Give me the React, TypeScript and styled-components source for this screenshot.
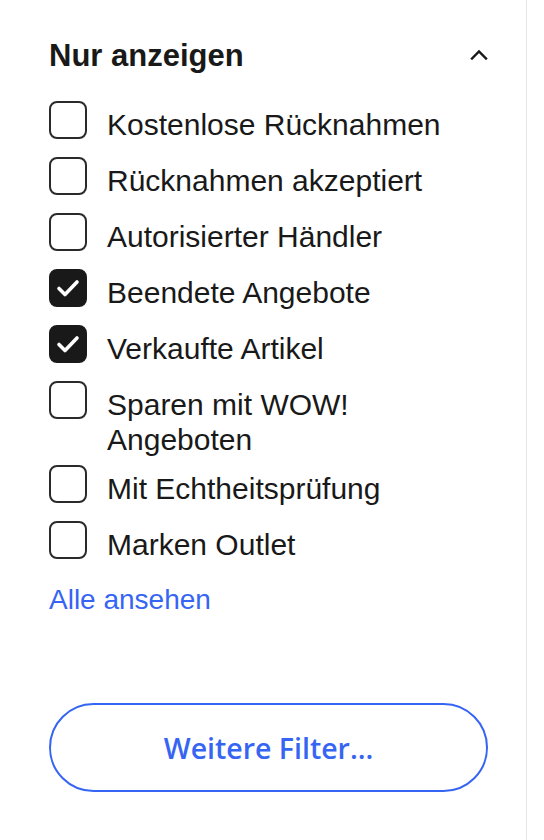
import * as React from 'react';
import styled, {createGlobalStyle} from 'styled-components';

const GlobalStyle = createGlobalStyle`
  body {
    margin: 0;
    background: #ffffff;
    font-family: "Liberation Sans", Arial, Helvetica, sans-serif;
    color: #191919;
  }
`;

const Panel = styled.aside`
  width: 527px;
  min-height: 840px;
  box-sizing: border-box;
  padding: 38px 38px 40px 49px;
  border-right: 1px solid #e5e5e5;
  background: #ffffff;
`;

const Header = styled.div`
  display: flex;
  justify-content: space-between;
  align-items: center;
  height: 36px;
`;

const Title = styled.h3`
  margin: 0;
  font-size: 31px;
  line-height: 36px;
  font-weight: 700;
  color: #191919;
`;

const ToggleButton = styled.button`
  display: flex;
  align-items: center;
  justify-content: center;
  padding: 0;
  margin-top: -4px;
  border: none;
  background: none;
  color: #191919;
  cursor: pointer;
`;

const List = styled.ul`
  list-style: none;
  margin: 25px 0 0;
  padding: 0;
  display: flex;
  flex-direction: column;
  gap: 14px;
`;

const Row = styled.li`
  display: flex;
  align-items: flex-start;
  gap: 20px;
  cursor: pointer;
`;

const BoxWrap = styled.span`
  flex: none;
  height: 42px;
  display: flex;
  align-items: center;
`;

interface BoxProps {
  $checked: boolean;
}
const Box = styled.span<BoxProps>`
  box-sizing: border-box;
  width: 38px;
  height: 38px;
  border-radius: 8px;
  border: 2px solid ${(p: BoxProps) => (p.$checked ? '#191919' : '#2a2a2a')};
  background: ${(p: BoxProps) => (p.$checked ? '#191919' : '#ffffff')};
  display: flex;
  align-items: center;
  justify-content: center;
`;

const LabelText = styled.span`
  font-size: 30px;
  line-height: 35px;
  margin-top: 8px;
  margin-bottom: -8px;
  color: #191919;
`;

const SeeAll = styled.a`
  display: inline-block;
  margin-top: 22px;
  font-size: 28px;
  line-height: 34px;
  color: #3665f3;
  text-decoration: none;
`;

const MoreFilters = styled.button`
  display: flex;
  align-items: center;
  justify-content: center;
  width: 100%;
  height: 89px;
  margin-top: 86px;
  border: 2px solid #3665f3;
  border-radius: 45px;
  background: #ffffff;
  color: #3665f3;
  font-family: "Open Sans", "Liberation Sans", sans-serif;
  font-size: 28.5px;
  font-weight: 600;
  cursor: pointer;
`;

const items: {label: string; checked: boolean}[] = [
  {label: 'Kostenlose Rücknahmen', checked: false},
  {label: 'Rücknahmen akzeptiert', checked: false},
  {label: 'Autorisierter Händler', checked: false},
  {label: 'Beendete Angebote', checked: true},
  {label: 'Verkaufte Artikel', checked: true},
  {label: 'Sparen mit WOW! Angeboten', checked: false},
  {label: 'Mit Echtheitsprüfung', checked: false},
  {label: 'Marken Outlet', checked: false},
];

const ChevronUp = () => (
  <svg width="18" height="11" viewBox="0 0 18 11" fill="none">
    <path d="M2 9.5 L9 2.5 L16 9.5" stroke="currentColor" strokeWidth="2.4" strokeLinecap="square" />
  </svg>
);

const Check = () => (
  <svg width="26" height="26" viewBox="0 0 26 26" fill="none">
    <path d="M4 13.5 L10 19.5 L22 7" stroke="#ffffff" strokeWidth="3.6" strokeLinecap="round" strokeLinejoin="round" />
  </svg>
);

const App: React.FunctionComponent = () => {
  const [state, setState] = React.useState(items);

  const toggle = (i: number) =>
    setState((s) => s.map((it, k) => (k === i ? {...it, checked: !it.checked} : it)));

  return (
    <React.Fragment>
      <GlobalStyle />
      <Panel>
        <Header>
          <Title>Nur anzeigen</Title>
          <ToggleButton aria-label="Einklappen">
            <ChevronUp />
          </ToggleButton>
        </Header>
        <List>
          {state.map((it, i) => (
            <Row key={it.label} onClick={() => toggle(i)}>
              <BoxWrap>
                <Box $checked={it.checked}>{it.checked && <Check />}</Box>
              </BoxWrap>
              <LabelText>
                {it.label === 'Sparen mit WOW! Angeboten' ? (
                  <>Sparen mit WOW!<br />Angeboten</>
                ) : (
                  it.label
                )}
              </LabelText>
            </Row>
          ))}
        </List>
        <SeeAll href="#">Alle ansehen</SeeAll>
        <MoreFilters>Weitere Filter...</MoreFilters>
      </Panel>
    </React.Fragment>
  );
};

export default App;
